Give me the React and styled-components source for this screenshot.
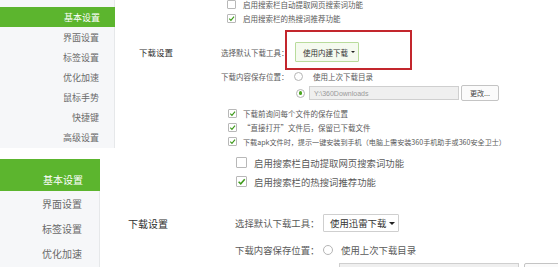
import React from "react";
import styled, { createGlobalStyle } from "styled-components";

const GlobalStyle = createGlobalStyle`
  html, body {
    margin: 0;
    padding: 0;
    background: #fff;
  }
  body {
    font-family: "Noto Sans CJK SC", "Noto Sans", sans-serif;
  }
`;

const menu = ["基本设置", "界面设置", "标签设置", "优化加速", "鼠标手势", "快捷键", "高级设置"];

export default function App() {
  return (
    <>
      <GlobalStyle />
      <Page>
        {/* smaller screenshot (with the red annotation) */}
        <Shot $height={148}>
          <Sidebar $width={115} $top={7}>
            {menu.map((m, i) => (
              <SideItem key={m} $active={i === 0} $h={20} $font={9} $right={15}>
                {m}
              </SideItem>
            ))}
          </Sidebar>

          <Content $top={-3} $font={7.5}>
            <CheckList $indent={112}>
              <CheckRow $h={14} $gap={7}>
                <Box $size={9} />
                启用搜索栏自动提取网页搜索词功能
              </CheckRow>
              <CheckRow $h={14} $gap={7}>
                <Box $size={9} $checked>
                  <Tick />
                </Box>
                启用搜索栏的热搜词推荐功能
              </CheckRow>
            </CheckList>

            <Section $pad={24} $mt={17}>
              <SectionTitle $w={82} $h={20} $font={8.5}>
                下载设置
              </SectionTitle>
              <Form>
                <FieldRow $h={20}>
                  <FieldLabel $w={74}>选择默认下载工具：</FieldLabel>
                  <Select $w={64} $h={20} $pad={7} $border="#b9dc9c" $bg="#f5faef">
                    使用内建下载
                    <Caret $s={2.8} />
                  </Select>
                </FieldRow>
                <FieldRow $h={14} $mt={7}>
                  <FieldLabel $w={73}>下载内容保存位置：</FieldLabel>
                  <Radio $size={9} />
                  <RadioText $gap={10}>使用上次下载目录</RadioText>
                </FieldRow>
                <FieldRow $h={16} $mt={2} $indent={75}>
                  <Radio $size={9} $checked />
                  <PathInput $w={150} $h={14} $ml={4} $font={7}>
                    Y:\360Downloads
                  </PathInput>
                  <SmallButton $w={38} $h={16} $ml={2} $font={7}>
                    更改...
                  </SmallButton>
                </FieldRow>
                <CheckList $indent={7} $mt={5}>
                  <CheckRow $h={14} $gap={6}>
                    <Box $size={9} $checked>
                      <Tick />
                    </Box>
                    下载前询问每个文件的保存位置
                  </CheckRow>
                  <CheckRow $h={14} $gap={6}>
                    <Box $size={9} $checked>
                      <Tick />
                    </Box>
                    “直接打开”文件后，保留已下载文件
                  </CheckRow>
                  <CheckRow $h={15} $gap={6}>
                    <Box $size={9} $checked>
                      <Tick />
                    </Box>
                    <Small>下载apk文件时，提示一键安装到手机（电脑上需安装360手机助手或360安全卫士）</Small>
                  </CheckRow>
                </CheckList>
              </Form>
            </Section>
          </Content>

          <Annotation />
        </Shot>

        {/* larger screenshot, cropped at the bottom edge */}
        <Shot $grow>
          <Sidebar $width={100} $top={0} $mt={11}>
            {menu.slice(0, 4).map((m, i) => (
              <SideItem
                key={m}
                $active={i === 0}
                $h={i === 0 ? 24 : 25}
                $lead={i === 0 ? 8 : 0}
                $font={10}
                $right={17}
              >
                {m}
              </SideItem>
            ))}
          </Sidebar>

          <Content $top={5} $font={9.4}>
            <CheckList $indent={136}>
              <CheckRow $h={19} $gap={7}>
                <Box $size={11} />
                启用搜索栏自动提取网页搜索词功能
              </CheckRow>
              <CheckRow $h={19} $gap={7}>
                <Box $size={11} $checked>
                  <Tick />
                </Box>
                启用搜索栏的热搜词推荐功能
              </CheckRow>
            </CheckList>

            <Section $pad={28} $mt={23}>
              <SectionTitle $w={107} $h={18} $font={10}>
                下载设置
              </SectionTitle>
              <Form>
                <FieldRow $h={18}>
                  <FieldLabel $w={88}>选择默认下载工具：</FieldLabel>
                  <Select $w={76} $h={18} $pad={6} $border="#cfcfcf" $bg="#fff">
                    使用迅雷下载
                    <Caret $s={3.3} />
                  </Select>
                </FieldRow>
                <FieldRow $h={19} $mt={8}>
                  <FieldLabel $w={88}>下载内容保存位置：</FieldLabel>
                  <Radio $size={10} />
                  <RadioText $gap={8}>使用上次下载目录</RadioText>
                </FieldRow>
                <FieldRow $h={20} $mt={4} $indent={104}>
                  <PathInput $w={180} $h={20} $font={9} />
                  <SmallButton $w={40} $h={20} $ml={5} $font={9} />
                </FieldRow>
              </Form>
            </Section>
          </Content>
        </Shot>
      </Page>
    </>
  );
}

function Tick() {
  return (
    <svg viewBox="0 0 10 10" width="100%" height="100%">
      <path d="M1.8 5.2 L4.2 7.6 L8.6 2.4" fill="none" stroke="#3f9b1c" strokeWidth="1.7" />
    </svg>
  );
}

const Page = styled.div`
  width: 558px;
  height: 267px;
  overflow: hidden;
  display: flex;
  flex-direction: column;
  background: #fff;
`;

const Shot = styled.section`
  position: relative;
  display: flex;
  flex: ${(p) => (p.$grow ? "1" : "none")};
  height: ${(p) => (p.$height ? `${p.$height}px` : "auto")};
  min-height: 0;
  overflow: hidden;
  background: #fff;
`;

const Sidebar = styled.nav`
  width: ${(p) => p.$width}px;
  flex: none;
  box-sizing: border-box;
  margin-top: ${(p) => p.$mt || 0}px;
  padding-top: ${(p) => p.$top}px;
  background: #f6f7f9;
  border-right: 1px solid #e6e8ea;
  display: flex;
  flex-direction: column;
`;

const SideItem = styled.div`
  flex: none;
  height: ${(p) => p.$h}px;
  padding-top: ${(p) => p.$lead || 0}px;
  padding-right: ${(p) => p.$right}px;
  display: flex;
  align-items: center;
  justify-content: flex-end;
  font-size: ${(p) => p.$font}px;
  color: ${(p) => (p.$active ? "#fff" : "#6a6a6a")};
  background: ${(p) => (p.$active ? "#5cb52e" : "transparent")};
  margin-right: ${(p) => (p.$active ? "-1px" : "0")};
  white-space: nowrap;
`;

const Content = styled.div`
  flex: 1;
  min-width: 0;
  display: flex;
  flex-direction: column;
  margin-top: ${(p) => (p.$top < 0 ? p.$top : 0)}px;
  padding-top: ${(p) => (p.$top > 0 ? p.$top : 0)}px;
  font-size: ${(p) => p.$font}px;
  color: #5a5a5a;
`;

const CheckList = styled.div`
  flex: none;
  display: flex;
  flex-direction: column;
  padding-left: ${(p) => p.$indent}px;
  margin-top: ${(p) => p.$mt || 0}px;
`;

const CheckRow = styled.div`
  flex: none;
  height: ${(p) => p.$h}px;
  display: flex;
  align-items: center;
  gap: ${(p) => p.$gap}px;
  white-space: nowrap;
`;

const Box = styled.span`
  width: ${(p) => p.$size}px;
  height: ${(p) => p.$size}px;
  flex: none;
  box-sizing: border-box;
  border: 1px solid #b8b8b8;
  border-radius: 1px;
  background: #fff;
  display: flex;
`;

const Small = styled.span`
  font-size: 7.1px;
`;

const Section = styled.div`
  flex: none;
  display: flex;
  padding-left: ${(p) => p.$pad}px;
  margin-top: ${(p) => p.$mt}px;
`;

const SectionTitle = styled.div`
  width: ${(p) => p.$w}px;
  height: ${(p) => p.$h}px;
  flex: none;
  display: flex;
  align-items: center;
  font-size: ${(p) => p.$font}px;
  color: #2e2e2e;
`;

const Form = styled.div`
  display: flex;
  flex-direction: column;
`;

const FieldRow = styled.div`
  flex: none;
  height: ${(p) => p.$h}px;
  margin-top: ${(p) => p.$mt || 0}px;
  padding-left: ${(p) => p.$indent || 0}px;
  display: flex;
  align-items: center;
  white-space: nowrap;
`;

const FieldLabel = styled.span`
  width: ${(p) => p.$w}px;
  flex: none;
`;

const Select = styled.div`
  width: ${(p) => p.$w}px;
  height: ${(p) => p.$h}px;
  flex: none;
  box-sizing: border-box;
  padding: 0 3px 0 ${(p) => p.$pad}px;
  gap: 3px;
  border: 1px solid ${(p) => p.$border};
  background: ${(p) => p.$bg};
  border-radius: 1px;
  display: flex;
  align-items: center;
  justify-content: space-between;
  color: #333;
`;

const Caret = styled.span`
  flex: none;
  width: 0;
  height: 0;
  border-left: ${(p) => p.$s}px solid transparent;
  border-right: ${(p) => p.$s}px solid transparent;
  border-top: ${(p) => p.$s}px solid #222;
`;

const Radio = styled.span`
  width: ${(p) => p.$size}px;
  height: ${(p) => p.$size}px;
  flex: none;
  box-sizing: border-box;
  border: 1px solid #b5b5b5;
  border-radius: 50%;
  background: #fff;
  display: flex;
  align-items: center;
  justify-content: center;

  &::after {
    content: "";
    display: ${(p) => (p.$checked ? "block" : "none")};
    width: 45%;
    height: 45%;
    border-radius: 50%;
    background: #4aa51f;
  }
`;

const RadioText = styled.span`
  margin-left: ${(p) => p.$gap}px;
`;

const PathInput = styled.div`
  width: ${(p) => p.$w}px;
  height: ${(p) => p.$h}px;
  flex: none;
  margin-left: ${(p) => p.$ml || 0}px;
  box-sizing: border-box;
  padding-left: 4px;
  border: 1px solid #cfcfcf;
  background: #efefef;
  color: #9a9a9a;
  font-family: "Liberation Sans", Arial, sans-serif;
  font-size: ${(p) => p.$font}px;
  display: flex;
  align-items: center;
`;

const SmallButton = styled.div`
  width: ${(p) => p.$w}px;
  height: ${(p) => p.$h}px;
  flex: none;
  margin-left: ${(p) => p.$ml}px;
  box-sizing: border-box;
  border: 1px solid #c4c4c4;
  border-radius: 2px;
  background: #fbfbfb;
  color: #444;
  font-size: ${(p) => p.$font}px;
  display: flex;
  align-items: center;
  justify-content: center;
`;

const Annotation = styled.div`
  position: absolute;
  left: 285px;
  top: 30px;
  width: 127px;
  height: 40px;
  box-sizing: border-box;
  border: 2px solid #c3262d;
  pointer-events: none;
`;
